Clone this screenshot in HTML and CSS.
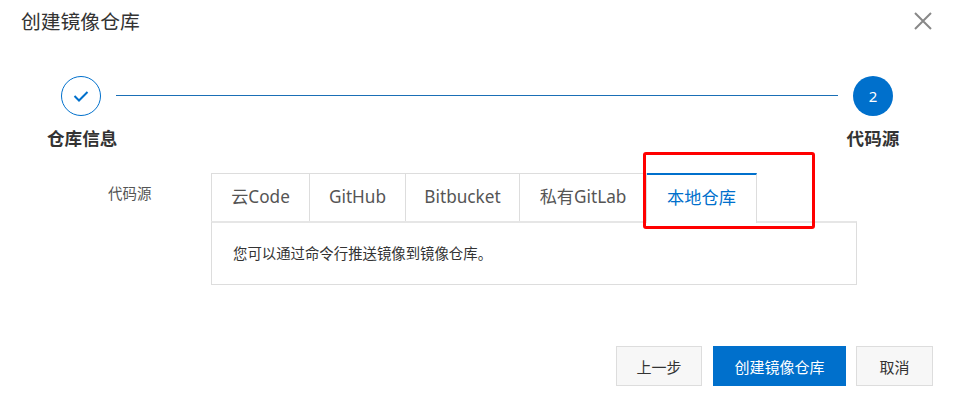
FILE: index.html
```html
<!DOCTYPE html>
<html lang="zh-CN">
<head>
<meta charset="utf-8">
<title>创建镜像仓库</title>
<link rel="stylesheet" href="styles.css">
</head>
<body>
<div class="dialog">
  <div class="header">
    <div class="title">创建镜像仓库</div>
    <svg class="close" width="20" height="20" viewBox="0 0 20 20"><path d="M2 2 L18 18 M18 2 L2 18" stroke="#888" stroke-width="2" fill="none"/></svg>
  </div>
  <div class="steps">
    <div class="circle done">
      <svg width="40" height="40" viewBox="0 0 40 40"><circle cx="20" cy="20" r="19.5" fill="none" stroke="#0070cc" stroke-width="1"/><path d="M13.5 20 L18 24.5 L26.5 16" stroke="#0070cc" stroke-width="2" fill="none"/></svg>
    </div>
    <div class="line"></div>
    <div class="circle current">2</div>
    <div class="label first">仓库信息</div>
    <div class="label last">代码源</div>
  </div>
  <div class="form-row">
    <div class="form-label">代码源</div>
    <div class="tabs-wrap">
      <div class="tabs">
        <div class="tab t1">云Code</div>
        <div class="tab t2">GitHub</div>
        <div class="tab t3">Bitbucket</div>
        <div class="tab t4">私有GitLab</div>
        <div class="tab t5 active">本地仓库</div>
      </div>
      <div class="panel">您可以通过命令行推送镜像到镜像仓库。</div>
      <div class="highlight"></div>
    </div>
  </div>
  <div class="footer">
    <button class="btn prev">上一步</button>
    <button class="btn primary">创建镜像仓库</button>
    <button class="btn cancel">取消</button>
  </div>
</div>
</body>
</html>
```
FILE: styles.css
```css
* { box-sizing: border-box; }
html, body { margin: 0; padding: 0; background: #fff; }
body {
  font-family: "Noto Sans", "Noto Sans CJK SC", sans-serif;
  color: #333;
  width: 953px;
  height: 397px;
  overflow: hidden;
}
.dialog { width: 953px; }
.header {
  display: flex;
  justify-content: space-between;
  align-items: flex-start;
  padding: 8px 20px 0 21px;
}
.title {
  font-size: 19.8px;
  line-height: 28px;
  color: #333;
}
.close { margin-top: 3px; }
.steps {
  display: grid;
  grid-template-columns: 68px 1fr 54px;
  grid-template-rows: 40px auto;
  margin: 40px 53px 0 47px;
}
.circle {
  width: 40px;
  height: 40px;
  justify-self: center;
  border-radius: 50%;
}
.circle svg { display: block; }
.circle.current {
  background: #0070cc;
  color: #fff;
  font-size: 15px;
  line-height: 40px;
  text-align: center;
}
.line {
  height: 1px;
  background: #1a6fb6;
  align-self: center;
  margin: 0 8px 1px 1px;
}
.label {
  grid-row: 2;
  font-size: 17.6px;
  font-weight: bold;
  line-height: 24px;
  margin-top: 10px;
  text-align: center;
  white-space: nowrap;
  color: #333;
}
.label.first { grid-column: 1; }
.label.last { grid-column: 3; }
.form-row {
  display: flex;
  margin-top: 23px;
  padding-left: 108px;
}
.form-label {
  width: 103px;
  font-size: 14.5px;
  line-height: 24px;
  padding-top: 8px;
  color: #555;
}
.tabs-wrap {
  position: relative;
  width: 646px;
}
.tabs {
  display: flex;
  height: 48px;
}
.tab {
  height: 48px;
  border: 1px solid #ddd;
  border-left: none;
  border-bottom: none;
  font-size: 17.2px;
  line-height: 46px;
  color: #555;
  text-align: center;
  background: #fff;
  white-space: nowrap;
}
.tab.t1 { border-left: 1px solid #ddd; width: 99px; }
.tab.t2 { width: 96px; }
.tab.t3 { width: 114px; }
.tab.t4 { width: 127px; }
.tab.t5 { width: 110px; }
.tab.active {
  border-top: 2px solid #0070cc;
  color: #0070cc;
  line-height: 45px;
  height: 50px;
  position: relative;
  z-index: 1;
}
.panel {
  height: 64px;
  border: 1px solid #ddd;
  border-top: 2px solid #e6e6e6;
  font-size: 14.4px;
  line-height: 61px;
  padding-left: 21px;
  color: #333;
}
.highlight {
  position: absolute;
  left: 432px;
  top: -21px;
  width: 172px;
  height: 77px;
  border: 3px solid #ff0000;
  border-radius: 3px;
  z-index: 2;
}
.footer {
  display: flex;
  justify-content: flex-end;
  gap: 10px;
  margin-top: 61px;
  padding-right: 20px;
}
.btn {
  height: 40px;
  font-family: "Noto Sans", "Noto Sans CJK SC", sans-serif;
  font-size: 15px;
  border: 1px solid #ddd;
  background: #f7f7f7;
  color: #333;
  padding: 0;
  margin: 0;
}
.btn.prev { width: 86px; margin-right: 1px; }
.btn.primary { width: 133px; background: #0070cc; border-color: #0070cc; color: #fff; }
.btn.cancel { width: 77px; }
```
